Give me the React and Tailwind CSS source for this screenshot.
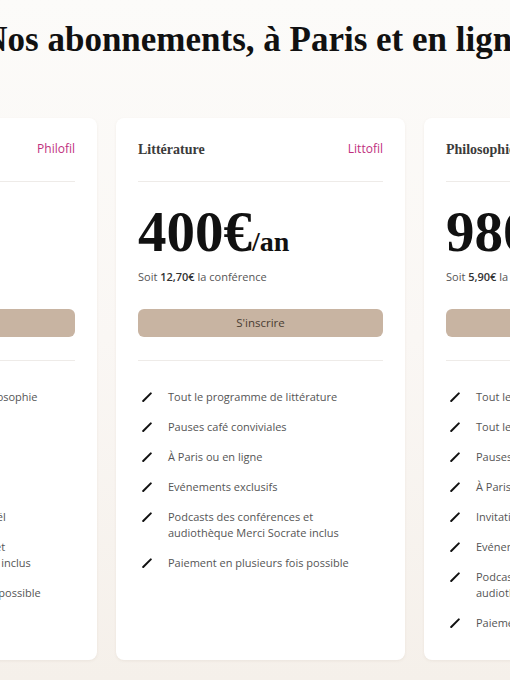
const plans = [
  {
    name: 'Philosophie',
    tag: 'Philofil',
    price: '590€',
    per: '12,30€',
    items: [
      ['Tout le programme de philosophie'],
      ['Pauses café conviviales'],
      ['À Paris ou en ligne'],
      ['Evénements exclusifs'],
      ['Invitation à la soirée de Noël'],
      ['Podcasts des conférences et', 'audiothèque Merci Socrate inclus'],
      ['Paiement en plusieurs fois possible'],
    ],
  },
  {
    name: 'Littérature',
    tag: 'Littofil',
    price: '400€',
    per: '12,70€',
    items: [
      ['Tout le programme de littérature'],
      ['Pauses café conviviales'],
      ['À Paris ou en ligne'],
      ['Evénements exclusifs'],
      ['Podcasts des conférences et', 'audiothèque Merci Socrate inclus'],
      ['Paiement en plusieurs fois possible'],
    ],
  },
  {
    name: 'Philosophie & Littérature',
    tag: 'Philittofil',
    price: '980€',
    per: '5,90€',
    items: [
      ['Tout le programme de philosophie'],
      ['Tout le programme de littérature'],
      ['Pauses café conviviales'],
      ['À Paris ou en ligne'],
      ['Invitation à la soirée de Noël'],
      ['Evénements exclusifs'],
      ['Podcasts des conférences et', 'audiothèque Merci Socrate inclus'],
      ['Paiement en plusieurs fois possible'],
    ],
  },
]

const serif = "font-['Liberation_Serif',serif]"
const sans = "font-['Open_Sans',sans-serif]"

function Pen() {
  return (
    <svg width="10" height="10" viewBox="0 0 10 10" className="mt-[3px] ml-[4px] shrink-0">
      <path d="M1.2 9 L8.8 1.4" stroke="#111" strokeWidth="2" strokeLinecap="round" />
    </svg>
  )
}

function Card({ plan }) {
  return (
    <div className="w-[289px] shrink-0 rounded-lg bg-white px-[22px] pt-[20px] pb-[30px] shadow-[0_1px_3px_rgba(120,90,60,0.08)]">
      <div className="flex h-[22px] items-center justify-between whitespace-nowrap">
        <span className={`${serif} text-[14px] font-bold text-[#3b3b3b]`}>{plan.name}</span>
        <span className={`${sans} text-[12px] text-[#c0307e]`}>{plan.tag}</span>
      </div>
      <div className="mt-[21px] border-t border-[#eeebe8]" />
      <div className={`${serif} mt-[21px] flex h-[56px] items-baseline whitespace-nowrap text-[#111]`}>
        <span className="text-[57px] font-bold leading-none">{plan.price}</span>
        <span className="text-[28px] font-bold leading-none">/an</span>
      </div>
      <p className={`${sans} mt-[8px] whitespace-nowrap text-[11px] leading-[20px] text-[#555]`}>
        Soit <span className="font-semibold text-[#333]">{plan.per}</span> la conférence
      </p>
      <button className={`${sans} mt-[22px] h-[28px] w-full rounded-md bg-[#c8b4a2] text-[11.5px] text-[#4a3d33]`}>
        S'inscrire
      </button>
      <div className="mt-[23px] border-t border-[#eeebe8]" />
      <ul className={`${sans} mt-[28px] flex flex-col gap-[14.5px] text-[11px] leading-[15.5px] text-[#555]`}>
        {plan.items.map((lines) => (
          <li key={lines[0]} className="flex items-start gap-[16px] whitespace-nowrap">
            <Pen />
            <span>
              {lines.map((l, i) => (
                <span key={i} className="block">{l}</span>
              ))}
            </span>
          </li>
        ))}
      </ul>
    </div>
  )
}

export default function App() {
  return (
    <div className="h-[680px] w-[510px] overflow-hidden bg-gradient-to-b from-[#fcfbf9] via-[#faf7f4] to-[#f5f0ea]">
      <div className="flex justify-center pt-[19px]">
        <h1 className={`${serif} whitespace-nowrap text-[35px] font-bold leading-[42px] text-[#111]`}>
          Nos abonnements, à Paris et en ligne
        </h1>
      </div>
      <div className="mt-[57px] flex justify-center gap-[19px] pl-[11px]">
        {plans.map((p) => (
          <Card key={p.tag} plan={p} />
        ))}
      </div>
    </div>
  )
}
